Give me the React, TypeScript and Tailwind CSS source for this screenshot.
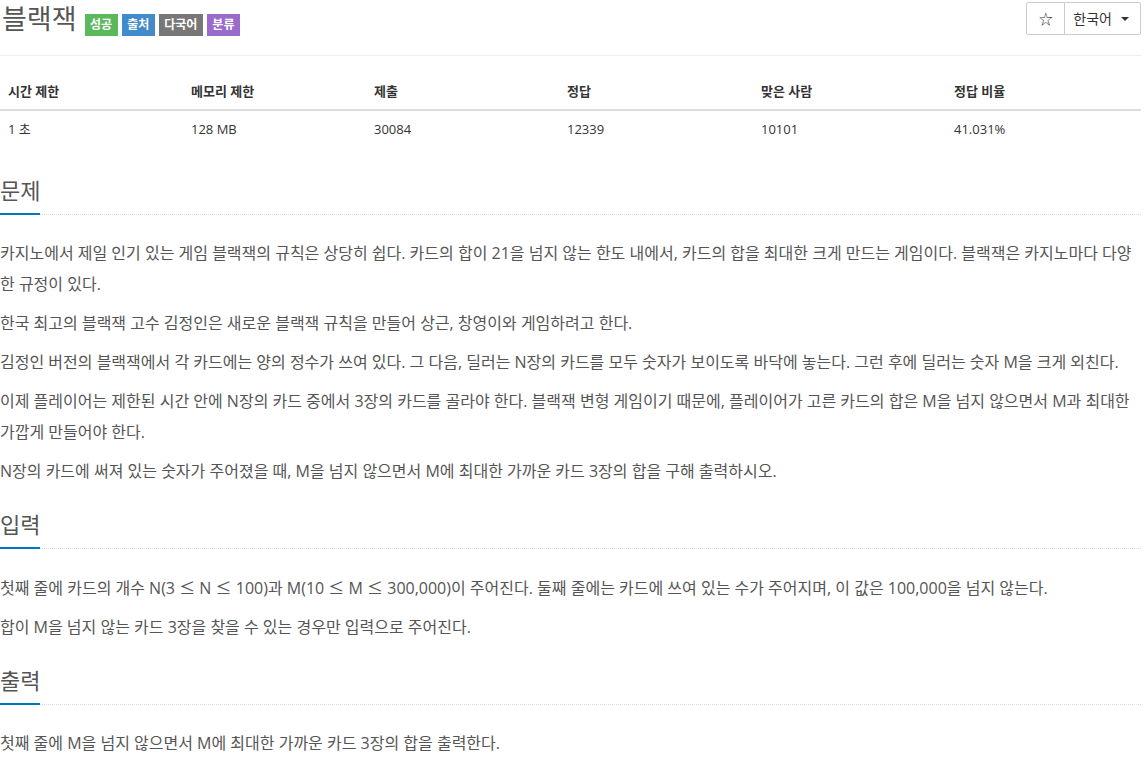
import React from 'react';

const FONT = { fontFamily: '"Open Sans", "Noto Sans CJK KR", sans-serif' };

const stats = [
  ['시간 제한', '1 초'],
  ['메모리 제한', '128 MB'],
  ['제출', '30084'],
  ['정답', '12339'],
  ['맞은 사람', '10101'],
  ['정답 비율', '41.031%'],
];

const Le = () => <span style={{ fontFamily: '"Noto Sans CJK KR", sans-serif' }}>≤</span>;

function Section({ title, children }: { title: string; children: React.ReactNode }) {
  return (
    <section>
      <div className="flex border-b border-dotted border-[#dddddd]">
        <h2 className="text-[22px] leading-[30px] text-[#555] pb-2 border-b-2 border-[#0076c0] mb-[-1px]">{title}</h2>
      </div>
      <div className="pt-[23px] pb-[14px] text-[16px] leading-[31px] text-[#555] break-all">{children}</div>
    </section>
  );
}

export default function App() {
  return (
    <div className="w-[1141px] bg-white" style={FONT}>
      {/* title bar */}
      <div className="flex items-start justify-between h-[56px] border-b border-[#eeeeee]">
        <div className="flex items-end pl-[2px] pt-[1px]">
          <h1 className="text-[27px] leading-[36px] text-[#555]">블랙잭</h1>
          <div className="flex gap-1 ml-[8px] mb-[1px]">
            <span className="bg-[#5cb85c] text-white text-[12px] font-bold px-[5.5px] leading-[22px]">성공</span>
            <span className="bg-[#428bca] text-white text-[12px] font-bold px-[5.5px] leading-[22px]">출처</span>
            <span className="bg-[#777777] text-white text-[12px] font-bold px-[5.5px] leading-[22px]">다국어</span>
            <span className="bg-[#9b6bcc] text-white text-[12px] font-bold px-[5.5px] leading-[22px]">분류</span>
          </div>
        </div>
        <div className="flex mt-[2px] border border-[#cccccc] rounded-[2px] h-[33px] text-[14px] text-[#333]">
          <button className="w-[38px] flex items-center justify-center border-r border-[#cccccc]">☆</button>
          <button className="flex items-center gap-[9px] pl-[8px] pr-[11px]">
            한국어
            <span className="w-0 h-0 border-l-[4px] border-r-[4px] border-t-[4px] border-l-transparent border-r-transparent border-t-[#333]" />
          </button>
        </div>
      </div>

      {/* stats table */}
      <div className="mt-[17px] mb-[28px] text-[13px] text-[#333]">
        <div className="grid grid-cols-[183px_183px_193px_194px_193px_1fr] border-b-2 border-[#dddddd] font-bold">
          {stats.map(([h]) => (
            <div key={h} className="px-2 py-2 leading-[20px]">{h}</div>
          ))}
        </div>
        <div className="grid grid-cols-[183px_183px_193px_194px_193px_1fr]">
          {stats.map(([h, v]) => (
            <div key={h} className="px-2 py-2 leading-[20px]">{v}</div>
          ))}
        </div>
      </div>

      <Section title="문제">
        <p className="mb-2">카지노에서 제일 인기 있는 게임 블랙잭의 규칙은 상당히 쉽다. 카드의 합이 21을 넘지 않는 한도 내에서, 카드의 합을 최대한 크게 만드는 게임이다. 블랙잭은 카지노마다 다양한 규정이 있다.</p>
        <p className="mb-2">한국 최고의 블랙잭 고수 김정인은 새로운 블랙잭 규칙을 만들어 상근, 창영이와 게임하려고 한다.</p>
        <p className="mb-2">김정인 버전의 블랙잭에서 각 카드에는 양의 정수가 쓰여 있다. 그 다음, 딜러는 N장의 카드를 모두 숫자가 보이도록 바닥에 놓는다. 그런 후에 딜러는 숫자 M을 크게 외친다.</p>
        <p className="mb-2">이제 플레이어는 제한된 시간 안에 N장의 카드 중에서 3장의 카드를 골라야 한다. 블랙잭 변형 게임이기 때문에, 플레이어가 고른 카드의 합은 M을 넘지 않으면서 M과 최대한 가깝게 만들어야 한다.</p>
        <p className="mb-2">N장의 카드에 써져 있는 숫자가 주어졌을 때, M을 넘지 않으면서 M에 최대한 가까운 카드 3장의 합을 구해 출력하시오.</p>
      </Section>

      <Section title="입력">
        <p className="mb-2">첫째 줄에 카드의 개수 N(3 <Le /> N <Le /> 100)과 M(10 <Le /> M <Le /> 300,000)이 주어진다. 둘째 줄에는 카드에 쓰여 있는 수가 주어지며, 이 값은 100,000을 넘지 않는다.</p>
        <p className="mb-2">합이 M을 넘지 않는 카드 3장을 찾을 수 있는 경우만 입력으로 주어진다.</p>
      </Section>

      <Section title="출력">
        <p className="mb-2">첫째 줄에 M을 넘지 않으면서 M에 최대한 가까운 카드 3장의 합을 출력한다.</p>
      </Section>
    </div>
  );
}
